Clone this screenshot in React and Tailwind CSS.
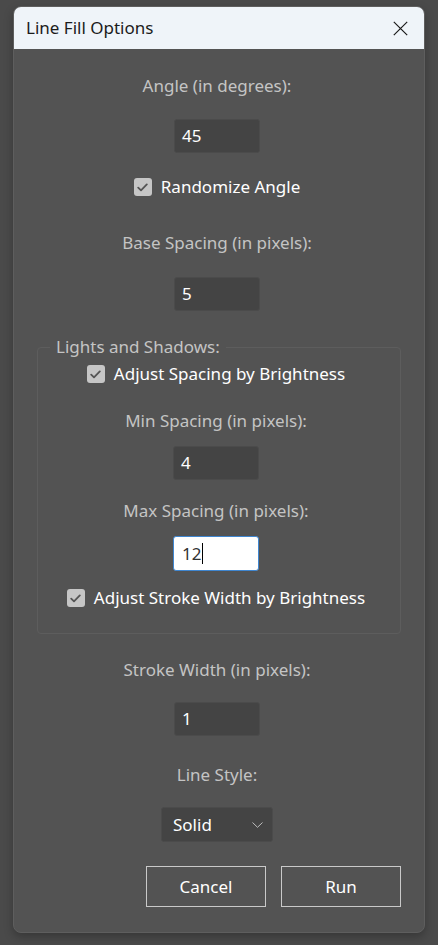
import { useState } from 'react';

const font = { fontFamily: '"Noto Sans", "Open Sans", sans-serif' };

const Label = ({ children, className = '' }) => (
  <div className={`h-[22px] leading-[22px] text-[17px] text-[#c4c4c4] text-center ${className}`}>
    {children}
  </div>
);

const NumberBox = ({ value, className = '' }) => (
  <div
    className={`w-[86px] h-[34px] rounded-[3px] bg-[#444444] border border-[#4b4b4b] pl-[7px] flex items-center text-[17px] text-white ${className}`}
  >
    {value}
  </div>
);

const Check = ({ label, className = '' }) => (
  <div className={`h-[22px] flex items-center justify-center gap-[9px] ${className}`}>
    <span className="w-[18px] h-[18px] rounded-[3px] bg-[#c6c6c6] flex items-center justify-center">
      <svg width="11" height="9" viewBox="0 0 11 9" fill="none">
        <path d="M1.2 4.6 L4 7.3 L9.8 1.4" stroke="#555555" strokeWidth="1.8" strokeLinecap="round" strokeLinejoin="round" />
      </svg>
    </span>
    <span className="text-[17px] text-white leading-[22px]">{label}</span>
  </div>
);

const App = () => {
  const [maxSpacing] = useState('12');

  return (
    <div className="w-[438px] h-[945px] bg-[#4a4a4a] pt-[6px] pl-[13px]" style={font}>
      <div className="w-[412px] h-[927px] rounded-[8px] border border-[#5e5e5e] bg-[#535353] overflow-hidden flex flex-col shadow-[0_4px_10px_rgba(0,0,0,0.25)]">
        {/* Title bar */}
        <div className="h-[42px] bg-[#eff4f9] flex items-center justify-between pl-[12px] pr-[16px] shrink-0">
          <span className="text-[17px] text-[#1b1b1b]">Line Fill Options</span>
          <svg width="15" height="15" viewBox="0 0 15 15" fill="none">
            <path d="M0.8 0.8 L14.2 14.2 M14.2 0.8 L0.8 14.2" stroke="#1b1b1b" strokeWidth="1.2" />
          </svg>
        </div>

        {/* Body */}
        <div className="flex flex-col items-center pr-[4px]">
          <Label className="mt-[26px]">Angle (in degrees):</Label>
          <NumberBox value="45" className="mt-[22px]" />
          <Check label="Randomize Angle" className="mt-[23px]" />
          <Label className="mt-[34px]">Base Spacing (in pixels):</Label>
          <NumberBox value="5" className="mt-[23px]" />
        </div>

        {/* Lights and Shadows group */}
        <fieldset className="mt-[25px] ml-[23px] mr-[23px] border border-[#5d5d5d] rounded-[4px] pb-[24px]">
          <legend className="ml-[12px] px-[6px] h-[22px] leading-[22px] text-[17px] text-[#c4c4c4]">
            Lights and Shadows:
          </legend>
          <div className="flex flex-col items-center pr-[6px]">
            <Check label="Adjust Spacing by Brightness" className="mt-[5px]" />
            <Label className="mt-[25px]">Min Spacing (in pixels):</Label>
            <NumberBox value="4" className="mt-[14px]" />
            <Label className="mt-[20px]">Max Spacing (in pixels):</Label>
            <div className="mt-[14px] w-[86px] h-[35px] rounded-[3px] bg-white border border-[#3f86d0] pl-[8px] flex items-center text-[17px] text-[#333333]">
              {maxSpacing}
              <span className="w-[1px] h-[21px] bg-black ml-[1px]" />
            </div>
            <Check label="Adjust Stroke Width by Brightness" className="mt-[16px]" />
          </div>
        </fieldset>

        <div className="flex flex-col items-center pr-[4px]">
          <Label className="mt-[25px]">Stroke Width (in pixels):</Label>
          <NumberBox value="1" className="mt-[21px]" />
          <Label className="mt-[28px]">Line Style:</Label>
          <div className="mt-[21px] w-[112px] h-[35px] rounded-[3px] bg-[#444444] border border-[#4b4b4b] pl-[11px] pr-[9px] flex items-center justify-between text-[17px] text-white">
            <span>Solid</span>
            <svg width="11" height="6" viewBox="0 0 11 6" fill="none">
              <path d="M0.5 0.5 L5.5 5.3 L10.5 0.5" stroke="#bdbdbd" strokeWidth="1" />
            </svg>
          </div>
        </div>

        <div className="mt-[24px] flex justify-end gap-[15px] pr-[23px]">
          <button className="w-[120px] h-[41px] border border-[#c9c9c9] text-[17px] text-white">Cancel</button>
          <button className="w-[120px] h-[41px] border border-[#c9c9c9] text-[17px] text-white">Run</button>
        </div>
      </div>
    </div>
  );
};

export default App;
